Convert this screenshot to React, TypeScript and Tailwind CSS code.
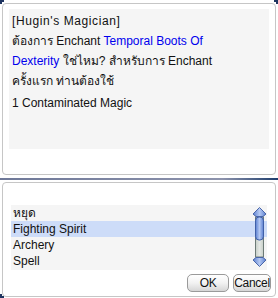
import React from 'react';

const font = { fontFamily: '"Liberation Sans", "Noto Sans", "DejaVu Sans", sans-serif' };

const options = ['หยุด', 'Fighting Spirit', 'Archery', 'Spell'];

function ScrollBar() {
  return (
    <svg width="15" height="61" viewBox="0 0 15 61">
      <defs>
        <linearGradient id="blu" x1="0" x2="1" y1="0" y2="0">
          <stop offset="0" stopColor="#5a7fd0" />
          <stop offset="0.5" stopColor="#b4c8f2" />
          <stop offset="1" stopColor="#5a7fd0" />
        </linearGradient>
        <linearGradient id="trk" x1="0" x2="1" y1="0" y2="0">
          <stop offset="0" stopColor="#c6cec8" />
          <stop offset="0.5" stopColor="#e4e8e4" />
          <stop offset="1" stopColor="#c6cec8" />
        </linearGradient>
      </defs>
      {/* track */}
      <rect x="3.5" y="10" width="8" height="40" fill="url(#trk)" stroke="#6c7a76" strokeWidth="1" />
      {/* thumb */}
      <rect x="3.5" y="10" width="8" height="23" rx="3.5" fill="url(#blu)" stroke="#3f5fa8" strokeWidth="1" />
      {/* up arrow */}
      <path d="M7.5 0.5 L14 7 L11 9.5 L4 9.5 L1 7 Z" fill="url(#blu)" stroke="#4a66a8" strokeWidth="1" />
      {/* down arrow */}
      <path d="M7.5 59.5 L14 53 L11 50.5 L4 50.5 L1 53 Z" fill="url(#blu)" stroke="#4a66a8" strokeWidth="1" />
    </svg>
  );
}

function Btn({ label, w }: { label: string; w: string }) {
  return (
    <button
      className={`${w} h-[18px] rounded-[5px] border border-[#9a9a9a] bg-gradient-to-b from-white via-[#f2f2f2] to-[#d6d6d6] text-[12px] leading-[16px] tracking-[-0.3px] text-[#111] flex items-center justify-center`}
      style={font}
    >
      {label}
    </button>
  );
}

export default function App() {
  return (
    <div className="relative w-[278px] h-[298px] bg-white overflow-hidden text-[12px] text-[#111]" style={font}>
      {/* frame corner marks */}
      <div className="absolute left-0 top-0 h-[4px] w-[4px] border-l-2 border-t-2 border-[#1f3560]" />
      <div className="absolute right-0 top-0 h-[4px] w-[4px] border-r-2 border-t-2 border-[#1f3560]" />
      <div className="absolute left-0 bottom-0 h-[4px] w-[4px] border-l-2 border-b-2 border-[#1f3560]" />

      {/* message panel */}
      <div className="mx-[2px] mt-[3px] h-[172px] rounded-[4px] border border-[#c6c6c6] px-[6px] pt-[5px]">
        <div className="h-[140px] bg-[#f5f5f5] px-[3px] pt-[2px] leading-[20px]">
          <p className="tracking-[0.6px]">[Hugin's Magician]</p>
          <p>
            ต้องการ Enchant <span className="text-[#0000ee]">Temporal Boots Of</span>
            <br />
            <span className="text-[#0000ee]">Dexterity</span> ใช่ไหม? สำหรับการ Enchant
            <br />
            ครั้งแรก ท่านต้องใช้
          </p>
          <p className="mt-[2px]">1 Contaminated Magic</p>
        </div>
      </div>

      {/* divider */}
      <div className="mt-[3px] h-[2px] bg-gradient-to-r from-[#6e7898] via-[#8d93ac] via-80% to-[#1d3d6c]" />

      {/* selection panel */}
      <div className="mx-[2px] mt-[2px] h-[115px] rounded-[4px] border border-[#c6c6c6] px-[8px] pt-[22px]">
        <div className="relative h-[65px] bg-[#f5f5f5]">
          {options.map((o, i) => (
            <div key={o} className={`h-[16px] leading-[16px] pl-[2px] ${i === 1 ? 'bg-[#cddcf8]' : ''}`}>
              {o}
            </div>
          ))}
          <div className="absolute right-0 top-[2px]">
            <ScrollBar />
          </div>
        </div>
        <div className="-mr-[4px] mt-[4px] flex justify-end gap-[4px]">
          <Btn label="OK" w="w-[42px]" />
          <Btn label="Cancel" w="w-[38px]" />
        </div>
      </div>
    </div>
  );
}
